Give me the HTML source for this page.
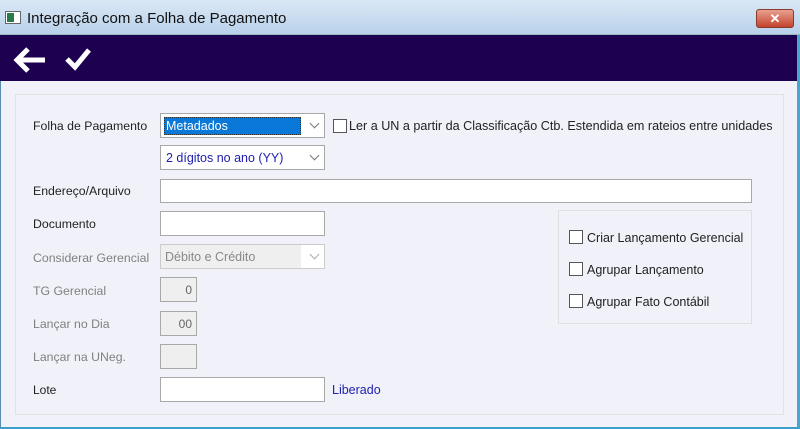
<!DOCTYPE html>
<html><head><meta charset="utf-8"><style>
*{margin:0;padding:0;box-sizing:border-box}
body{width:800px;height:429px;overflow:hidden;background:#fff;font-family:"Liberation Sans",sans-serif;font-size:12px;color:#222;position:relative}
.a{position:absolute}
.win{left:0;top:0;width:800px;height:429px;background:#f1f2f9;border:1px solid #5a8bb0;border-top:none;border-bottom:2px solid #3aa0c8;border-right:3px solid #4aa6cc}
.title{left:0;top:0;width:800px;height:35px;background:linear-gradient(#dbe8f5,#b9d1ea);border-bottom:1px solid #9bb}
.tb{left:0;top:35px;width:797px;height:46px;background:#1e0050}
.inp{background:#fff;border:1px solid #a8a8a8;height:25px}
.dis{background:#efefef;border:1px solid #a8a8a8}
.lbl{left:33px}
.g{color:#808080}
.cb{width:14px;height:14px;border:1px solid #555;background:#fff}
.arr{position:absolute;right:6px;top:6px;width:7px;height:7px;border-right:1px solid #777;border-bottom:1px solid #777;transform:rotate(45deg)}
</style></head><body>
<div class="a win"></div>
<div class="a title"></div>
<div class="a" style="left:5px;top:11px;width:16px;height:13px;background:#fff;border:1px solid #666"><div style="width:7px;height:9px;margin:1px;background:#2a7a4a"></div></div>
<div class="a" style="left:27px;top:10px;font-size:15px;color:#111">Integração com a Folha de Pagamento</div>
<div class="a" style="left:756px;top:9px;width:38px;height:19px;border-radius:3px;background:linear-gradient(#e8a090,#c4442c);border:1px solid #8a3a2a;color:#fff;font-weight:bold;text-align:center;font-size:13px;line-height:17px">✕</div>
<div class="a tb"></div>
<svg class="a" style="left:12px;top:46px" width="36" height="28"><path d="M16 3 L5 14 L16 25 M5 14 H33" stroke="#fff" stroke-width="5" fill="none" stroke-linejoin="miter"/></svg>
<svg class="a" style="left:64px;top:46px" width="28" height="26"><path d="M3 13 L11 21 L25 4" stroke="#fff" stroke-width="5" fill="none"/></svg>
<div class="a" style="left:15px;top:94px;width:769px;height:321px;border:1px solid #e2e2e2"></div>

<div class="a lbl" style="top:119px;font-size:12.3px">Folha de Pagamento</div>
<div class="a inp" style="left:160px;top:113px;width:165px"><div style="position:absolute;left:3px;top:3px;width:137px;height:18px;background:#0a78d8;border:1px dotted #333;color:#fff;padding-left:1px;line-height:16px;font-size:12.5px">Metadados</div><div class="arr"></div></div>
<div class="a cb" style="left:333px;top:119px"></div>
<div class="a" style="left:349px;top:119px;font-size:12.6px">Ler a UN a partir da Classificação Ctb. Estendida em rateios entre unidades</div>
<div class="a inp" style="left:160px;top:145px;width:165px"><div style="position:absolute;left:5px;top:5px;color:#2020b0;font-size:12.5px">2 dígitos no ano (YY)</div><div class="arr"></div></div>

<div class="a lbl" style="top:184px;font-size:12.3px">Endereço/Arquivo</div>
<div class="a inp" style="left:160px;top:179px;width:592px;height:24px"></div>
<div class="a lbl" style="top:217px;font-size:12.3px">Documento</div>
<div class="a inp" style="left:160px;top:211px;width:165px"></div>
<div class="a lbl g" style="top:251px;font-size:12.3px">Considerar Gerencial</div>
<div class="a" style="left:160px;top:244px;width:165px;height:25px;border:1px solid #ccc;background:#fff"><div style="position:absolute;left:0;top:0;width:140px;height:23px;background:#efefef;color:#888;padding:5px 0 0 4px;font-size:12.5px">Débito e Crédito</div><div class="arr" style="border-color:#aaa"></div></div>
<div class="a lbl g" style="top:284px;font-size:12.3px">TG Gerencial</div>
<div class="a dis" style="left:160px;top:277px;width:37px;height:25px;color:#666;text-align:right;padding:5px 4px 0 0">0</div>
<div class="a lbl g" style="top:317px;font-size:12.3px">Lançar no Dia</div>
<div class="a dis" style="left:160px;top:311px;width:37px;height:25px;color:#666;text-align:right;padding:5px 4px 0 0">00</div>
<div class="a lbl g" style="top:350px;font-size:12.3px">Lançar na UNeg.</div>
<div class="a dis" style="left:160px;top:344px;width:37px;height:25px"></div>
<div class="a lbl" style="top:383px">Lote</div>
<div class="a inp" style="left:160px;top:377px;width:165px"></div>
<div class="a" style="left:332px;top:383px;color:#2020b0;font-size:12.5px">Liberado</div>

<div class="a" style="left:558px;top:210px;width:194px;height:114px;border:1px solid #e0e0e0"></div>
<div class="a cb" style="left:569px;top:230px"></div><div class="a" style="left:587px;top:231px;font-size:12.5px">Criar Lançamento Gerencial</div>
<div class="a cb" style="left:569px;top:262px"></div><div class="a" style="left:587px;top:263px;font-size:12.5px">Agrupar Lançamento</div>
<div class="a cb" style="left:569px;top:294px"></div><div class="a" style="left:587px;top:295px;font-size:12.5px">Agrupar Fato Contábil</div>
</body></html>
